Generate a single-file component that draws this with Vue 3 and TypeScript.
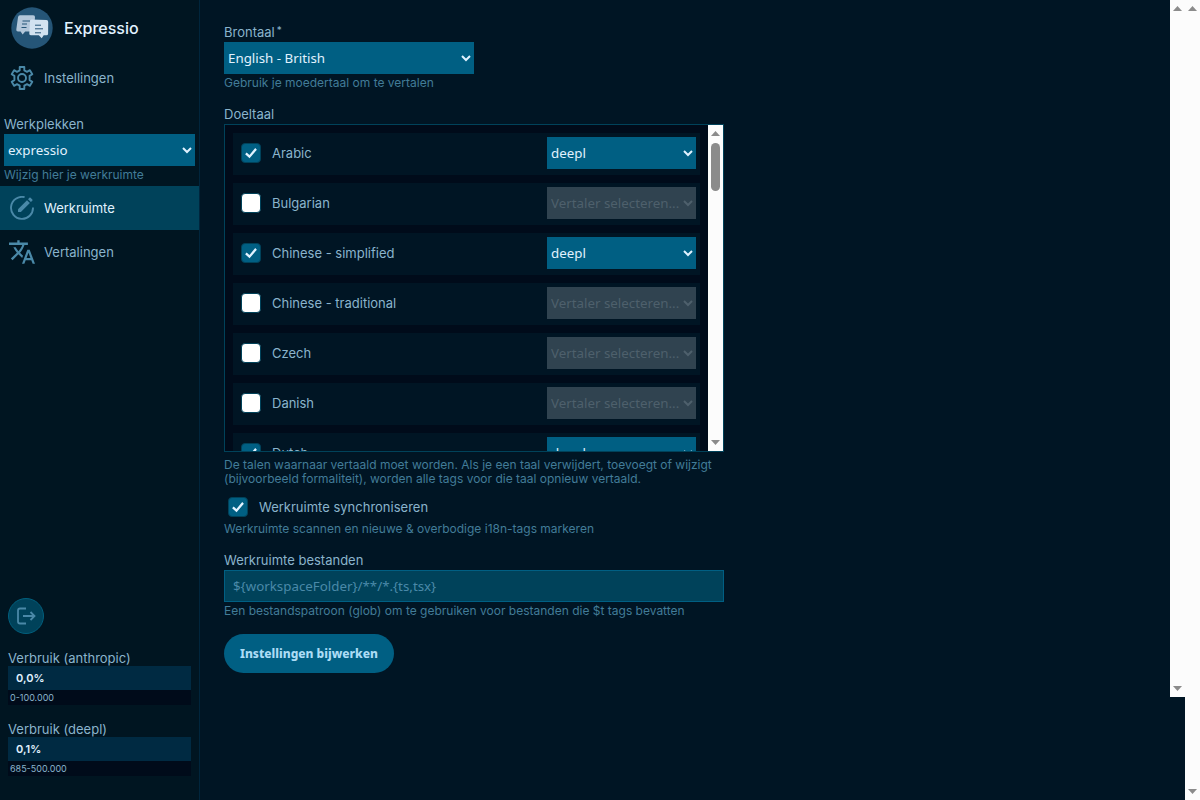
<script setup lang="ts">
import { reactive, ref } from 'vue'

interface Language {
  id: string
  name: string
  enabled: boolean
  engine: string
}

interface Usage {
  id: string
  share: string
  range: string
}

const languages = reactive<Language[]>([
  { id: 'ar', name: 'Arabic', enabled: true, engine: 'deepl' },
  { id: 'bg', name: 'Bulgarian', enabled: false, engine: '' },
  { id: 'zh-hans', name: 'Chinese - simplified', enabled: true, engine: 'deepl' },
  { id: 'zh-hant', name: 'Chinese - traditional', enabled: false, engine: '' },
  { id: 'cs', name: 'Czech', enabled: false, engine: '' },
  { id: 'da', name: 'Danish', enabled: false, engine: '' },
  { id: 'nl', name: 'Dutch', enabled: true, engine: 'deepl' },
])

const workspace = ref('expressio')
const source = ref('en-gb')
const sync = ref(true)
const pattern = ref('')
const patternHint = '${workspaceFolder}/**/*.{ts,tsx}'

const usage: Usage[] = [
  { id: 'anthropic', share: '0,0%', range: '0-100.000' },
  { id: 'deepl', share: '0,1%', range: '685-500.000' },
]
</script>

<template>
  <div class="app">
    <aside class="sidebar">
      <header class="brand">
        <svg class="logo" viewBox="0 0 42 42" aria-hidden="true">
          <circle cx="21" cy="21" r="20.7" fill="#255577" />
          <path d="M9 8.3h13.200q2 0 1.800 2l-1 12.200q-.2 2-2.200 2h-6.600l-2.600 3-2-3H7q-2 0-1.700-2l1.700-12.200q.3-2 2-2z" fill="#b3c7da" />
          <path d="M11.500 14h7.500M11 17h5M10.500 20.500h5" stroke="#255577" stroke-width="1" />
          <path d="M20.500 12.500l15 .6q1.700.1 1.700 1.800l-.1 11.800q0 1.600-1.700 1.600h-2.700l-2 2.900-2.900-2.900h-8q-1.700 0-1.500-1.700l.7-12.300q.1-1.800 1.500-1.800z" fill="#d2e2f0" />
          <path d="M24 18.200h6M24 21.800h8M24 25.800h6" stroke="#255577" stroke-width="1" />
        </svg>
        <span>Expressio</span>
      </header>

      <nav class="nav">
        <a href="#settings">
          <svg viewBox="0 0 24 24" aria-hidden="true" fill="none" stroke="currentColor" stroke-width="1.900" stroke-linejoin="round">
            <path d="M9.700 1h4.600v3.300l2.700 1.500 2.900-1.600 2.400 4-2.700 1.700v4.200l2.700 1.700-2.400 4-2.900-1.600-2.700 1.500V23H9.700v-3.300L7 18.200l-2.900 1.600-2.400-4 2.700-1.700V9.900L1.700 8.200l2.400-4L7 5.800l2.700-1.500z" />
            <circle cx="12" cy="12" r="4" />
          </svg>
          Instellingen
        </a>
      </nav>

      <div class="field workspace">
        <label for="workspace">Werkplekken</label>
        <select id="workspace" v-model="workspace">
          <option value="expressio">expressio</option>
        </select>
        <p class="help">Wijzig hier je werkruimte</p>
      </div>

      <nav class="nav">
        <a href="#workspace" class="current" aria-current="page">
          <svg viewBox="0 0 24 24" aria-hidden="true">
            <path d="M14.600 1.200A11 11 0 1 0 23 11.500" fill="none" stroke="currentColor" stroke-width="1.900" />
            <path d="M8 13.200L17 4.200l2.900 2.900-9 9H8z" fill="currentColor" />
            <path d="M18 3.200l1.400-1.400q.6-.6 1.200 0l1.700 1.700q.6.6 0 1.200L20.900 6.100z" fill="currentColor" />
          </svg>
          Werkruimte
        </a>
        <a href="#translations">
          <svg class="wide" viewBox="1 2 22 20" aria-hidden="true">
            <path fill="currentColor" d="M12.870 15.070l-2.540-2.510.03-.03c1.740-1.940 2.980-4.170 3.710-6.530H17V4h-7V2H8v2H1v1.990h11.170C11.500 7.920 10.440 9.750 9 11.350 8.070 10.320 7.300 9.190 6.690 8h-2c.73 1.630 1.730 3.170 2.980 4.560l-5.090 5.020L4 19l5-5 3.110 3.110.76-2.040zM18.500 10h-2L12 22h2l1.120-3h4.750L21 22h2l-4.500-12zm-2.620 7l1.620-4.330L19.120 17h-3.240z" />
          </svg>
          Vertalingen
        </a>
      </nav>

      <footer class="bottom">
        <button class="logout" type="button" aria-label="Uitloggen">
          <svg viewBox="0 0 20 20" aria-hidden="true" fill="none" stroke="currentColor" stroke-width="1.800">
            <path d="M10 2.500H4q-2 0-2 2v11q0 2 2 2h6M7 10h11M14.500 6l4 4-4 4" />
          </svg>
        </button>
        <section v-for="item in usage" :key="item.id" class="usage">
          <h2>Verbruik ({{ item.id }})</h2>
          <div class="share">{{ item.share }}</div>
          <div class="range">{{ item.range }}</div>
        </section>
      </footer>
    </aside>

    <div class="panel">
      <main class="main">
        <form class="form" @submit.prevent>
          <div class="field source">
            <label for="source">Brontaal<span class="required">*</span></label>
            <select id="source" v-model="source">
              <option value="en-gb">English - British</option>
            </select>
            <p class="help">Gebruik je moedertaal om te vertalen</p>
          </div>

          <div class="field">
            <span id="targets" class="label">Doeltaal</span>
            <div class="listbox">
              <ul class="languages" aria-labelledby="targets">
                <li v-for="lang in languages" :key="lang.id">
                  <input :id="lang.id" v-model="lang.enabled" type="checkbox" />
                  <label :for="lang.id">{{ lang.name }}</label>
                  <select v-model="lang.engine" :disabled="!lang.enabled" :aria-label="lang.name">
                    <option value="">Vertaler selecteren...</option>
                    <option value="deepl">deepl</option>
                  </select>
                </li>
              </ul>
              <div class="scrollbar" aria-hidden="true">
                <i class="up"></i>
                <i class="thumb"></i>
                <i class="down"></i>
              </div>
            </div>
            <p class="help spaced">De talen waarnaar vertaald moet worden. Als je een taal verwijdert, toevoegt of wijzigt (bijvoorbeeld formaliteit), worden alle tags voor die taal opnieuw vertaald.</p>
          </div>

          <div class="field sync">
            <div class="check">
              <input id="sync" v-model="sync" type="checkbox" />
              <label for="sync">Werkruimte synchroniseren</label>
            </div>
            <p class="help">Werkruimte scannen en nieuwe &amp; overbodige i18n-tags markeren</p>
          </div>

          <div class="field">
            <label for="pattern">Werkruimte bestanden</label>
            <input id="pattern" v-model="pattern" class="text" type="text" :placeholder="patternHint" />
            <p class="help">Een bestandspatroon (glob) om te gebruiken voor bestanden die $t tags bevatten</p>
          </div>

          <button class="submit" type="submit">Instellingen bijwerken</button>
        </form>
      </main>
      <div class="scrollbar" aria-hidden="true">
        <i class="up"></i>
        <i class="down"></i>
      </div>
    </div>

    <div class="scrollbar" aria-hidden="true">
      <i class="up"></i>
      <i class="down"></i>
    </div>
  </div>
</template>

<style>
body {
  background: #001524;
}
</style>

<style scoped>
* {
  box-sizing: border-box;
}

.app {
  display: flex;
  min-height: 100vh;
  background: #001524;
  color: #8ab4cc;
  font-family: Inter, "Noto Sans", sans-serif;
  font-size: 13px;
  line-height: 16px;
}

.sidebar {
  display: flex;
  flex-direction: column;
  flex: none;
  width: 200px;
  border-right: 1px solid #00253c;
  background: #001521;
}

.brand {
  display: flex;
  align-items: center;
  gap: 11px;
  height: 56px;
  padding-left: 11px;
  color: #e0f2ff;
  font-size: 16px;
  font-weight: 500;
}

.logo {
  width: 42px;
  height: 42px;
}

.nav a {
  display: flex;
  align-items: center;
  gap: 10px;
  height: 44px;
  padding-left: 10px;
  color: #8ab4cc;
  text-decoration: none;
}

.nav svg {
  width: 24px;
  height: 24px;
  color: #4a89a8;
}

.nav .wide {
  width: 26px;
  margin: 0 -1px;
}

.nav .current {
  background: #00425a;
  color: #e0f2ff;
}

.field {
  display: flex;
  flex-direction: column;
}

.field > label,
.label {
  display: block;
  height: 18px;
}

.workspace {
  padding: 16px 4px 4px;
}

select {
  height: 32px;
  border: 0;
  border-radius: 0;
  background-color: #005f83;
  color: #e0f2ff;
  font-family: "Noto Sans", sans-serif;
}

select:disabled {
  background-color: #304350;
  color: #4e606c;
  opacity: 1;
}

.help {
  margin: 2px 0 0;
  color: #427c98;
  font-size: 12px;
  line-height: 14px;
}

.spaced {
  margin-top: 6px;
}

.bottom {
  display: flex;
  flex-direction: column;
  margin-top: auto;
  padding: 0 8px 24px;
}

.logout {
  display: grid;
  place-items: center;
  width: 36px;
  height: 36px;
  padding: 0;
  border: 1px solid #005f7d;
  border-radius: 50%;
  background: #00425a;
  color: #4a89a8;
}

.logout svg {
  width: 20px;
  height: 20px;
}

.usage {
  padding-top: 16px;
}

.usage h2 {
  margin: 0;
  font-size: 13px;
  font-weight: 400;
  line-height: 16px;
}

.share {
  height: 24px;
  padding-left: 8px;
  background: #002a42;
  color: #e0f2ff;
  font-size: 11px;
  font-weight: 600;
  line-height: 24px;
}

.range {
  height: 15px;
  padding-left: 2px;
  background: #000b1a;
  font-size: 9px;
  line-height: 15px;
}

.panel {
  display: flex;
  flex: 1;
  align-self: flex-start;
}

.main {
  flex: 1;
  padding: 24px;
}

.scrollbar {
  display: flex;
  flex: none;
  flex-direction: column;
  align-items: center;
  width: 15px;
  padding: 6px 0;
  background: #fcfcfc;
}

.up,
.down {
  width: 9px;
  height: 5px;
  background: #8b8b8b;
  clip-path: polygon(50% 0, 100% 100%, 0 100%);
}

.down {
  margin-top: auto;
  clip-path: polygon(0 0, 100% 0, 50% 100%);
}

.thumb {
  width: 9px;
  height: 48px;
  margin-top: 7px;
  border-radius: 5px;
  background: #8b8b8b;
}

.form {
  display: flex;
  flex-direction: column;
  gap: 16px;
  max-width: 500px;
}

.source select {
  width: 50%;
}

.required {
  margin-left: 2px;
  font-size: 10px;
  line-height: 1;
  vertical-align: 3px;
}

.listbox {
  display: flex;
  height: 328px;
  border: 1px solid #00425a;
  background: #000b1a;
}

.languages {
  display: flex;
  flex: 1;
  flex-direction: column;
  gap: 8px;
  margin: 0;
  padding: 8px;
  list-style: none;
  overflow-y: auto;
}

.languages li {
  display: flex;
  flex: none;
  align-items: center;
  gap: 11px;
  height: 42px;
  padding: 4px 4px 6px 8px;
  background: #001524;
}

.languages label {
  flex: 1;
}

.languages select {
  width: 149px;
}

input[type="checkbox"] {
  display: grid;
  place-items: center;
  flex: none;
  appearance: none;
  width: 20px;
  height: 20px;
  margin: 0;
  border: 1px solid #00425a;
  border-radius: 4px;
  background: #fff;
}

input[type="checkbox"]:checked {
  background: #005f83;
}

input[type="checkbox"]:checked::before {
  content: "";
  width: 12px;
  height: 12px;
  background: #e0f2ff;
  clip-path: polygon(14% 46%, 1% 60%, 38% 94%, 99% 23%, 85% 9%, 37% 66%);
}

.check {
  display: flex;
  align-items: center;
  gap: 11px;
  height: 22px;
  padding-left: 4px;
}

.sync {
  gap: 2px;
  margin-top: -6px;
}

.text {
  height: 32px;
  padding: 0 8px;
  border: 1px solid #005f83;
  background: #00425a;
  color: #e0f2ff;
  font-family: "Noto Sans", sans-serif;
}

.text::placeholder {
  color: #4a89a8;
  opacity: 1;
}

.submit {
  align-self: flex-start;
  height: 39px;
  padding: 0 16px;
  border: 0;
  border-radius: 20px;
  background: #005f83;
  color: #acdcf5;
  font-family: "Noto Sans", sans-serif;
  font-size: 12px;
  font-weight: 800;
}
</style>
